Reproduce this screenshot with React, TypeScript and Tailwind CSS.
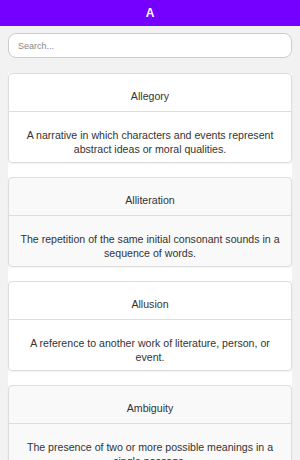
import React from "react";

const terms: { t: string; d: string }[] = [
  { t: "Allegory", d: "A narrative in which characters and events represent abstract ideas or moral qualities." },
  { t: "Alliteration", d: "The repetition of the same initial consonant sounds in a sequence of words." },
  { t: "Allusion", d: "A reference to another work of literature, person, or event." },
  { t: "Ambiguity", d: "The presence of two or more possible meanings in a single passage." },
  { t: "Anachronism", d: "Something that is out of place in the time period of a story." },
  { t: "Analogy", d: "A comparison between two things to explain or clarify an idea." },
  { t: "Anaphora", d: "The repetition of a word or phrase at the beginning of successive clauses." },
  { t: "Anecdote", d: "A short and amusing or interesting story about a real incident or person." },
  { t: "Antagonist", d: "A character or force in conflict with the main character." },
  { t: "Anthropomorphism", d: "Attributing human traits to animals, objects, or gods." },
  { t: "Antithesis", d: "The juxtaposition of contrasting ideas in parallel structure." },
  { t: "Aphorism", d: "A concise statement expressing a general truth." },
  { t: "Apostrophe", d: "A figure of speech addressing an absent person or an abstract idea." },
  { t: "Archetype", d: "A typical character, action, or situation that represents universal patterns." },
  { t: "Assonance", d: "The repetition of vowel sounds in nearby words." },
  { t: "Asyndeton", d: "The omission of conjunctions between parts of a sentence." },
  { t: "Atmosphere", d: "The mood or feeling created by a work of literature." },
  { t: "Autobiography", d: "An account of a person's life written by that person." },
];

export default function App() {
  return (
    <div
      className="h-[460px] w-[300px] overflow-y-auto bg-[#f2f2f2] [&::-webkit-scrollbar]:w-[3px] [&::-webkit-scrollbar-thumb]:bg-[#c1c1c1] [&::-webkit-scrollbar-track]:bg-[#f2f2f2]"
      style={{ fontFamily: '"Liberation Sans", Arial, sans-serif' }}
    >
      <div className="flex h-[26px] items-center justify-center bg-[#7600ff] text-[12px] font-bold leading-none text-white">
        A
      </div>
      <div className="px-[8px] pt-[7px]">
        <input
          type="text"
          placeholder="Search..."
          className="block h-[25px] w-full rounded-[8px] border border-[#cccccc] bg-white px-[9px] text-[9px] leading-none text-[#333] outline-none placeholder:text-[#888]"
        />
      </div>
      <div className="mx-[8px] mt-[15px] flex flex-col gap-[14px] bg-white pb-[14px]">
        {terms.map((x, i) => (
          <div
            key={x.t}
            className={`overflow-hidden rounded-[4px] border border-[#dddddd] text-center text-[10.6px] text-[#333] shadow-[0_1px_2px_rgba(0,0,0,0.06)] ${
              i % 2 === 0 ? "bg-white" : "bg-[#f9f9f9]"
            }`}
          >
            <div className="h-[38px] border-b border-[#dddddd] pt-[15px] leading-[14px]">
              {x.t}
            </div>
            <div className="flex h-[50px] items-start justify-center px-[8px] pt-[16px] leading-[14.4px]">
              {x.d}
            </div>
          </div>
        ))}
      </div>
    </div>
  );
}
